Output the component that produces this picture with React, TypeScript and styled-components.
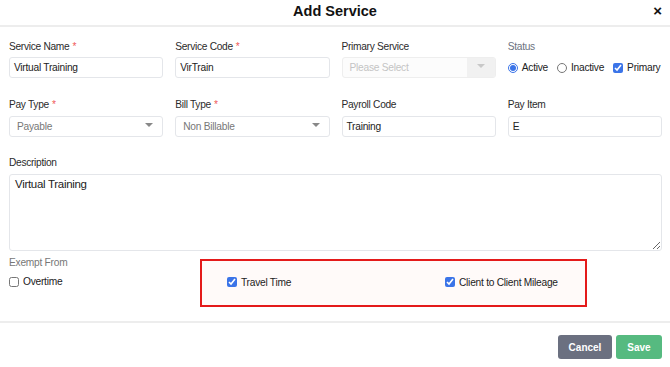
import React from "react";
import styled, { createGlobalStyle } from "styled-components";

const Global = createGlobalStyle`
  html, body { margin: 0; padding: 0; background: #fff; }
  body { font-family: "Liberation Sans", Arial, sans-serif; color: #333; }
  * { box-sizing: border-box; }
`;

const Modal = styled.div`
  width: 670px;
  height: 367px;
  display: flex;
  flex-direction: column;
  background: #fff;
`;

const Header = styled.div`
  height: 27px;
  border-bottom: 2px solid #ededed;
  display: flex;
  align-items: center;
  justify-content: center;
  position: relative;
`;

const Title = styled.h2`
  margin: 0;
  font-size: 14.5px;
  font-weight: 700;
  color: #111;
  line-height: 20px;
  margin-top: -4px;
`;

const Close = styled.span`
  position: absolute;
  right: 8px;
  top: 2px;
  font-size: 15px;
  font-weight: 700;
  color: #111;
`;

const Body = styled.div`
  padding: 13px 8px 0 9px;
  display: flex;
  flex-direction: column;
`;

const Row = styled.div<{ $mb?: number }>`
  display: grid;
  grid-template-columns: repeat(4, minmax(0, 1fr));
  column-gap: 12px;
  margin-bottom: ${(p) => p.$mb ?? 19}px;
`;

const Field = styled.div`
  display: flex;
  flex-direction: column;
  min-width: 0;
`;

const Label = styled.label<{ $muted?: boolean; $gap?: number }>`
  font-size: 10.2px;
  letter-spacing: -0.3px;
  line-height: 14px;
  color: ${(p) => (p.$muted ? "#6b7280" : "#2b2b2b")};
  margin-bottom: ${(p) => p.$gap ?? 4}px;
`;

const Req = styled.span`
  color: #ef5a5a;
  margin-left: 3px;
`;

const Input = styled.div`
  height: 21px;
  border: 1px solid #e4e6ea;
  border-radius: 3px;
  padding: 0 4px;
  display: flex;
  align-items: center;
  font-size: 10.2px;
  letter-spacing: -0.25px;
  color: #222;
`;

const Select = styled.div<{ $disabled?: boolean }>`
  height: 21px;
  border: 1px solid ${(p) => (p.$disabled ? "#eeeeee" : "#e4e6ea")};
  border-radius: 3px;
  padding-left: 7px;
  display: flex;
  align-items: center;
  font-size: 10.2px;
  letter-spacing: -0.25px;
  color: ${(p) => (p.$disabled ? "#c4c4c4" : "#777")};
  background: ${(p) => (p.$disabled ? "#fcfcfc" : "#fff")};
  position: relative;
  overflow: hidden;
`;

const Arrow = styled.span<{ $boxed?: boolean }>`
  position: absolute;
  right: 0;
  top: 0;
  bottom: 0;
  width: ${(p) => (p.$boxed ? "28px" : "26px")};
  background: ${(p) => (p.$boxed ? "#f1f1f1" : "transparent")};
  display: flex;
  align-items: center;
  justify-content: center;
  &::after {
    content: "";
    border-left: 4px solid transparent;
    border-right: 4px solid transparent;
    border-top: 4px solid ${(p) => (p.$boxed ? "#c8c8c8" : "#888")};
    margin-top: -3px;
  }
`;

const StatusRow = styled.div`
  display: flex;
  align-items: center;
  height: 21px;
  gap: 9px;
`;

const Choice = styled.label`
  display: inline-flex;
  align-items: center;
  font-size: 10.2px;
  letter-spacing: -0.25px;
  color: #222;
  white-space: nowrap;
`;

const Radio = styled.input.attrs({ type: "radio" })`
  margin: 0 4px 0 0;
  width: 10px;
  height: 10px;
  accent-color: #3b74e8;
`;

const Check = styled.input.attrs({ type: "checkbox" })`
  margin: 0 4px 0 0;
  width: 10px;
  height: 10px;
  accent-color: #3b74e8;
`;

const TextArea = styled.textarea`
  width: 100%;
  height: 77px;
  border: 1px solid #e4e6ea;
  border-radius: 3px;
  padding: 3px 5px;
  font-family: "Liberation Sans", Arial, sans-serif;
  font-size: 11.5px;
  letter-spacing: -0.3px;
  color: #222;
  resize: vertical;
  display: block;
  outline: none;
`;

const Exempt = styled.div`
  display: flex;
  margin-top: 8px;
  height: 48px;
`;

const ExemptLeft = styled.div`
  width: 191px;
  display: flex;
  flex-direction: column;
`;

const ExemptLabel = styled.div`
  font-size: 10.2px;
  letter-spacing: -0.25px;
  line-height: 14px;
  color: #777;
  margin-top: -3px;
  margin-bottom: 6px;
`;

const Highlight = styled.div`
  width: 387px;
  height: 48px;
  border: 2px solid #e41a1a;
  background: #fffaf9;
  display: grid;
  grid-template-columns: 218px 1fr;
  align-items: center;
  padding-left: 25px;
  padding-bottom: 2px;
`;

const Footer = styled.div`
  margin-top: 14px;
  border-top: 2px solid #ededed;
  display: flex;
  justify-content: flex-end;
  gap: 4px;
  padding: 12px 8px 0 0;
`;

const Button = styled.button<{ $variant: "cancel" | "save" }>`
  height: 24px;
  border: none;
  border-radius: 3px;
  padding: 0;
  width: ${(p) => (p.$variant === "cancel" ? "54px" : "46px")};
  background: ${(p) => (p.$variant === "cancel" ? "#6b7080" : "#56ba80")};
  color: #fff;
  font-family: "Liberation Sans", Arial, sans-serif;
  font-size: 10px;
  font-weight: 700;
`;

export default function App() {
  return (
    <>
      <Global />
      <Modal>
        <Header>
          <Title>Add Service</Title>
          <Close>×</Close>
        </Header>
        <Body>
          <Row $mb={20}>
            <Field>
              <Label $gap={3}>
                Service Name<Req>*</Req>
              </Label>
              <Input>Virtual Training</Input>
            </Field>
            <Field>
              <Label $gap={3}>
                Service Code<Req>*</Req>
              </Label>
              <Input>VirTrain</Input>
            </Field>
            <Field>
              <Label $gap={3}>Primary Service</Label>
              <Select $disabled>
                Please Select
                <Arrow $boxed />
              </Select>
            </Field>
            <Field>
              <Label $muted $gap={3}>
                Status
              </Label>
              <StatusRow>
                <Choice>
                  <Radio name="status" defaultChecked />
                  Active
                </Choice>
                <Choice>
                  <Radio name="status" />
                  Inactive
                </Choice>
                <Choice>
                  <Check defaultChecked />
                  Primary
                </Choice>
              </StatusRow>
            </Field>
          </Row>
          <Row>
            <Field>
              <Label>
                Pay Type<Req>*</Req>
              </Label>
              <Select>
                Payable
                <Arrow />
              </Select>
            </Field>
            <Field>
              <Label>
                Bill Type<Req>*</Req>
              </Label>
              <Select>
                Non Billable
                <Arrow />
              </Select>
            </Field>
            <Field>
              <Label>Payroll Code</Label>
              <Input>Training</Input>
            </Field>
            <Field>
              <Label>Pay Item</Label>
              <Input>E</Input>
            </Field>
          </Row>
          <Field>
            <Label $gap={4}>Description</Label>
            <TextArea defaultValue="Virtual Training" />
          </Field>
          <Exempt>
            <ExemptLeft>
              <ExemptLabel>Exempt From</ExemptLabel>
              <Choice>
                <Check />
                Overtime
              </Choice>
            </ExemptLeft>
            <Highlight>
              <Choice>
                <Check defaultChecked />
                Travel Time
              </Choice>
              <Choice>
                <Check defaultChecked />
                Client to Client Mileage
              </Choice>
            </Highlight>
          </Exempt>
        </Body>
        <Footer>
          <Button $variant="cancel">Cancel</Button>
          <Button $variant="save">Save</Button>
        </Footer>
      </Modal>
    </>
  );
}
